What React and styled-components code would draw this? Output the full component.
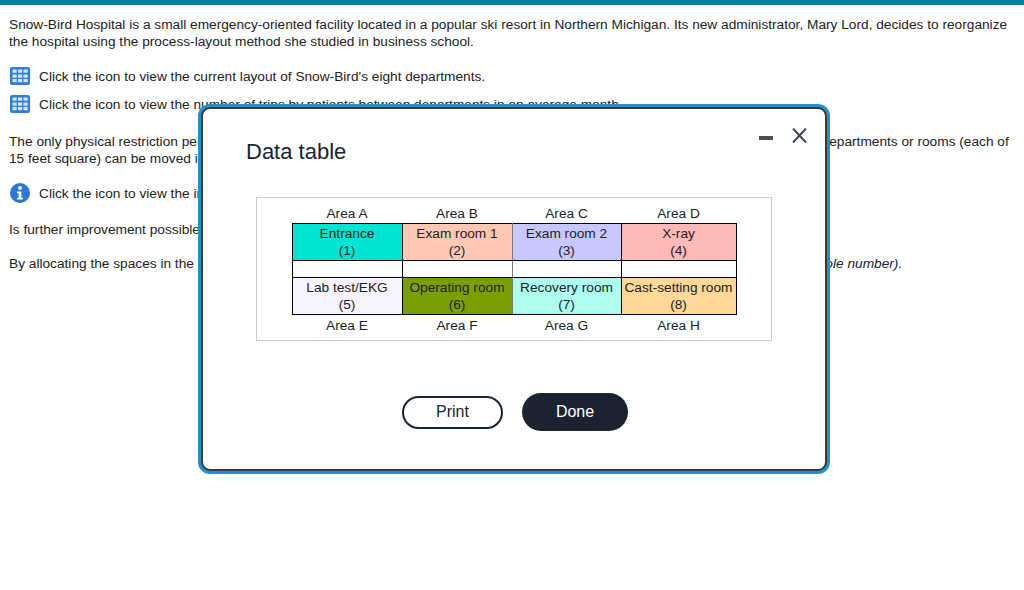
import React from 'react'
import styled, { createGlobalStyle } from 'styled-components'

const Global = createGlobalStyle`
  html, body { margin: 0; padding: 0; background: #fff; }
  body { font-family: "Liberation Sans", Arial, sans-serif; color: #222; }
`
const Page = styled.div`
  position: relative;
  width: 1024px;
  height: 590px;
  overflow: hidden;
  background: #fff;
`
const TopBar = styled.div`
  height: 5px;
  background: #007fa3;
`
const Content = styled.div`
  padding: 11px 9px 0;
  font-size: 13.7px;
  line-height: 17px;
`
const Para = styled.p`
  margin: 0 0 ${p => p.$gap || 17}px;
  white-space: ${p => (p.$nowrap ? 'nowrap' : 'normal')};
`
const IconRow = styled.div`
  display: flex;
  align-items: center;
  gap: 8px;
  height: 20px;
  margin-bottom: ${p => p.$gap || 8}px;
  white-space: nowrap;
`
const Italic = styled.em`
  font-style: italic;
`
const Modal = styled.div`
  position: absolute;
  left: 198px;
  top: 104px;
  width: 632px;
  height: 370px;
  box-sizing: border-box;
  background: #1a93d0;
  border-radius: 12px;
  padding: 3px;
`
const ModalInner = styled.div`
  height: 100%;
  box-sizing: border-box;
  background: #fff;
  border: 2px solid #3a3a3a;
  border-radius: 9px;
  padding: 28px 18px 0 43px;
  display: flex;
  flex-direction: column;
`
const Header = styled.div`
  display: flex;
  justify-content: space-between;
  align-items: flex-start;
  height: 60px;
`
const Title = styled.h2`
  margin: 0;
  padding-top: 2px;
  font-size: 22px;
  line-height: 26px;
  font-weight: 400;
  color: #1c2330;
`
const WindowControls = styled.div`
  display: flex;
  gap: 19px;
  margin-top: -9px;
`
const Frame = styled.div`
  width: 516px;
  height: 144px;
  margin-left: 10px;
  box-sizing: border-box;
  border: 1px solid #ccc;
  padding-top: 7px;
  display: flex;
  justify-content: center;
  align-items: flex-start;
`
const Table = styled.table`
  border-collapse: collapse;
  table-layout: fixed;
  width: 445px;
  font-size: 13.7px;
  line-height: 17px;
  color: #222;
  text-align: center;
`
const AreaCell = styled.td`
  padding: ${p => (p.$below ? '2px 0 0' : '0 0 1px')};
  height: 17px;
`
const RoomCell = styled.td`
  padding: 1px 0;
  height: 34px;
  border: 1px solid #000;
  border-right-color: ${p => (p.$seam ? '#777' : '#000')};
  background: ${p => p.$bg};
  white-space: nowrap;
`
const GapCell = styled.td`
  padding: 0;
  height: 16px;
  border: 1px solid #000;
  border-right-color: ${p => (p.$seam ? '#777' : '#000')};
  background: #fff;
`
const Buttons = styled.div`
  display: flex;
  align-items: center;
  gap: 19px;
  margin: 52px 0 0 156px;
`
const PrintButton = styled.button`
  width: 101px;
  height: 33px;
  box-sizing: border-box;
  border: 2px solid #1c2330;
  border-radius: 17px;
  background: #fff;
  color: #1c2330;
  font: 16px "Liberation Sans", Arial, sans-serif;
  padding: 0;
`
const DoneButton = styled.button`
  width: 106px;
  height: 38px;
  border: 0;
  border-radius: 19px;
  background: #1c2330;
  color: #fff;
  font: 16px "Liberation Sans", Arial, sans-serif;
  padding: 0;
`

const TableIcon = () => (
  <svg width="22" height="20" viewBox="0 0 22 20">
    <rect x="1" y="1" width="20" height="18" rx="2" fill="#2f7de1" />
    {[3.5, 8.5, 13].map(y =>
      [3.5, 9, 14.5].map(x => (
        <rect key={`${x}-${y}`} x={x} y={y} width="4.2" height="3.2" fill="#d6e6fb" />
      ))
    )}
  </svg>
)
const InfoIcon = () => (
  <svg width="22" height="22" viewBox="0 0 22 22">
    <circle cx="11" cy="11" r="10" fill="#2878d8" />
    <circle cx="11" cy="6" r="1.9" fill="#fff" />
    <path d="M8 9.4h4.4v6.3H14v1.9H8v-1.9h1.6v-4.4H8z" fill="#fff" />
  </svg>
)
const MinusIcon = () => (
  <svg width="14" height="16" viewBox="0 0 14 16">
    <rect x="0" y="8" width="14" height="4" fill="#4a4f57" />
  </svg>
)
const CloseIcon = () => (
  <svg width="15" height="15" viewBox="0 0 15 15">
    <path d="M1 .5l13 14M14 .5L1 14.5" stroke="#3d4654" strokeWidth="2" fill="none" />
  </svg>
)

const topRooms = [
  { name: 'Entrance', n: 1, bg: '#00e5d1' },
  { name: 'Exam room 1', n: 2, bg: '#ffc8b4' },
  { name: 'Exam room 2', n: 3, bg: '#c8c8ff' },
  { name: 'X-ray', n: 4, bg: '#ffb9b9' },
]
const bottomRooms = [
  { name: 'Lab test/EKG', n: 5, bg: '#f8f4ff' },
  { name: 'Operating room', n: 6, bg: '#7a9f00' },
  { name: 'Recovery room', n: 7, bg: '#aefcf0' },
  { name: 'Cast-setting room', n: 8, bg: '#ffd796' },
]

const Rooms = ({ rooms }) => (
  <tr>
    {rooms.map((r, i) => (
      <RoomCell key={r.n} $bg={r.bg} $seam={i === 1}>
        {r.name}
        <br />({r.n})
      </RoomCell>
    ))}
  </tr>
)

const App = () => (
  <Page>
    <Global />
    <TopBar />
    <Content>
      <Para $gap={16}>
        Snow-Bird Hospital is a small emergency-oriented facility located in a popular ski resort in Northern Michigan. Its new administrator, Mary Lord, decides to reorganize the hospital using the process-layout method she studied in business school.
      </Para>
      <IconRow>
        <TableIcon />
        Click the icon to view the current layout of Snow-Bird's eight departments.
      </IconRow>
      <IconRow $gap={19}>
        <TableIcon />
        Click the icon to view the number of trips by patients between departments in an average month.
      </IconRow>
      <Para $gap={16} $nowrap>
        The only physical restriction perceived by Lord is the need to keep the entrance at the ground floor and in its current location. All other departments or rooms (each of
        <br />
        15 feet square) can be moved if the layout analysis indicates a move would be beneficial.
      </Para>
      <IconRow $gap={18}>
        <InfoIcon />
        Click the icon to view the improved layout.
      </IconRow>
      <Para>Is further improvement possible?</Para>
      <Para $nowrap>
        By allocating the spaces in the best possible manner the total movement is minimized at feet each month <Italic>(enter your response as a whole number).</Italic>
      </Para>
    </Content>
    <Modal>
      <ModalInner>
        <Header>
          <Title>Data table</Title>
          <WindowControls>
            <MinusIcon />
            <CloseIcon />
          </WindowControls>
        </Header>
        <Frame>
          <Table>
            <colgroup>
              <col width="110" />
              <col width="110" />
              <col width="109" />
              <col width="115" />
            </colgroup>
            <tbody>
              <tr>
                {['A', 'B', 'C', 'D'].map(a => <AreaCell key={a}>Area {a}</AreaCell>)}
              </tr>
              <Rooms rooms={topRooms} />
              <tr>
                {[0, 1, 2, 3].map(i => <GapCell key={i} $seam={i === 1} />)}
              </tr>
              <Rooms rooms={bottomRooms} />
              <tr>
                {['E', 'F', 'G', 'H'].map(a => <AreaCell key={a} $below>Area {a}</AreaCell>)}
              </tr>
            </tbody>
          </Table>
        </Frame>
        <Buttons>
          <PrintButton>Print</PrintButton>
          <DoneButton>Done</DoneButton>
        </Buttons>
      </ModalInner>
    </Modal>
  </Page>
)

export default App
